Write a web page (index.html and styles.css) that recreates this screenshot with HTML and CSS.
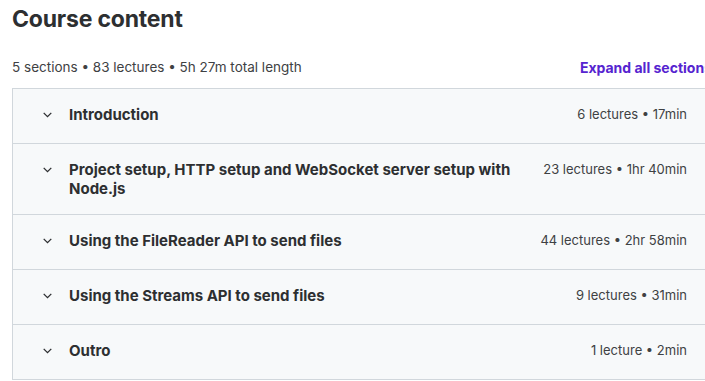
FILE: index.html
```html
<!DOCTYPE html>
<html lang="en">

<head>
    <meta charset="UTF-8">
    <meta name="viewport" content="width=device-width, initial-scale=1.0">
    <title>Course content</title>
    <link rel="stylesheet" href="styles.css">
</head>

<body>
    <div class="course-content">
        <h2>Course content</h2>

        <!-- Summary line and expand link -->
        <div class="summary">
            <span>5 sections &bull; 83 lectures &bull; 5h 27m total length</span>
            <a href="#" class="expand">Expand all sections</a>
        </div>

        <div class="sections">
            <div class="section">
                <svg class="chevron" viewBox="0 0 12 12"><path d="M2.5 4.5 L6 8 L9.5 4.5" /></svg>
                <span class="title">Introduction</span>
                <span class="meta">6 lectures &bull; 17min</span>
            </div>
            <div class="section">
                <svg class="chevron" viewBox="0 0 12 12"><path d="M2.5 4.5 L6 8 L9.5 4.5" /></svg>
                <span class="title">Project setup, HTTP setup and WebSocket server setup with Node.js</span>
                <span class="meta">23 lectures &bull; 1hr 40min</span>
            </div>
            <div class="section">
                <svg class="chevron" viewBox="0 0 12 12"><path d="M2.5 4.5 L6 8 L9.5 4.5" /></svg>
                <span class="title">Using the FileReader API to send files</span>
                <span class="meta">44 lectures &bull; 2hr 58min</span>
            </div>
            <div class="section">
                <svg class="chevron" viewBox="0 0 12 12"><path d="M2.5 4.5 L6 8 L9.5 4.5" /></svg>
                <span class="title">Using the Streams API to send files</span>
                <span class="meta">9 lectures &bull; 31min</span>
            </div>
            <div class="section">
                <svg class="chevron" viewBox="0 0 12 12"><path d="M2.5 4.5 L6 8 L9.5 4.5" /></svg>
                <span class="title">Outro</span>
                <span class="meta">1 lecture &bull; 2min</span>
            </div>
        </div>
    </div>
</body>

</html>
```

FILE: styles.css
```css
html {
    overflow: hidden;
}

body {
    font-family: 'Inter', 'Noto Sans', sans-serif;
    margin: 0;
    padding: 0;
    color: #2d2f31;
    background-color: white;
}

.course-content {
    width: 700px;
    margin-left: 12px;
}

h2 {
    font-size: 23px;
    font-weight: 700;
    margin: 4px 0 0 0;
    line-height: 30px;
    letter-spacing: -0.2px;
}

.summary {
    display: flex;
    justify-content: space-between;
    align-items: center;
    margin-top: 21px;
    height: 24px;
    font-size: 13.5px;
    color: #3e4143;
}

.expand {
    color: #5624d0;
    font-weight: 700;
    font-size: 14px;
    text-decoration: none;
}

.sections {
    margin-top: 9px;
    border: 1px solid #d1d7dc;
    border-bottom: none;
}

.section {
    display: flex;
    align-items: flex-start;
    gap: 15px;
    padding: 16px 24px 16px 28px;
    min-height: 22px;
    background-color: #f7f9fa;
    border-bottom: 1px solid #d1d7dc;
}

.chevron {
    width: 13px;
    height: 13px;
    margin-top: 3px;
    flex-shrink: 0;
    fill: none;
    stroke: #2d2f31;
    stroke-width: 1.2;
}

.title {
    flex: 1;
    font-size: 15px;
    font-weight: 700;
    line-height: 19px;
}

.meta {
    font-size: 13px;
    line-height: 19px;
    color: #3e4143;
    white-space: nowrap;
}
```
